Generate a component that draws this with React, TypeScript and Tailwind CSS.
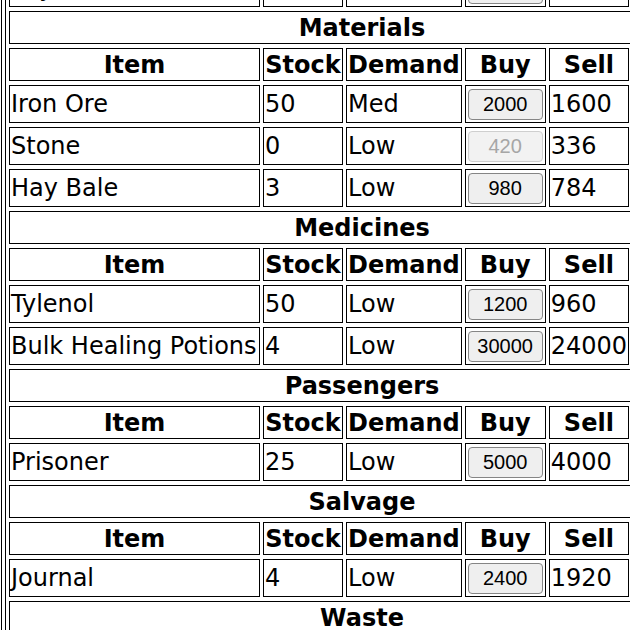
type Item = {
  name: string;
  stock: number;
  demand: string;
  buy: number;
  sell: number;
  disabled?: boolean;
};

type Section = { title: string; items: Item[] };

const sections: Section[] = [
  {
    title: "Materials",
    items: [
      { name: "Iron Ore", stock: 50, demand: "Med", buy: 2000, sell: 1600 },
      { name: "Stone", stock: 0, demand: "Low", buy: 420, sell: 336, disabled: true },
      { name: "Hay Bale", stock: 3, demand: "Low", buy: 980, sell: 784 },
    ],
  },
  {
    title: "Medicines",
    items: [
      { name: "Tylenol", stock: 50, demand: "Low", buy: 1200, sell: 960 },
      { name: "Bulk Healing Potions", stock: 4, demand: "Low", buy: 30000, sell: 24000 },
    ],
  },
  {
    title: "Passengers",
    items: [{ name: "Prisoner", stock: 25, demand: "Low", buy: 5000, sell: 4000 }],
  },
  {
    title: "Salvage",
    items: [{ name: "Journal", stock: 4, demand: "Low", buy: 2400, sell: 1920 }],
  },
];

const cell = "border border-black p-[1px]";
// headings sit a pixel lower in their boxes
const head = "border border-black px-[1px] pt-[2px] pb-0";

function BuyButton({ price, disabled }: { price: number; disabled?: boolean }) {
  return (
    <button
      disabled={disabled}
      className={
        "mx-auto block h-[31px] w-[75px] rounded-[4px] border font-['Liberation_Sans',Arial,sans-serif] text-[20px] leading-none " +
        (disabled
          ? "border-[#cfcfcf] bg-[#f2f2f2] text-[#a6a6a6]"
          : "border-[#858585] bg-[#efefef] text-black")
      }
    >
      {price}
    </button>
  );
}

function ItemRow({ item }: { item: Item }) {
  return (
    <tr>
      <td className={cell + " h-[38px]"}>{item.name}</td>
      <td className={cell}>{item.stock}</td>
      <td className={cell}>{item.demand}</td>
      <td className={cell}>
        <BuyButton price={item.buy} disabled={item.disabled} />
      </td>
      <td className={cell}>{item.sell}</td>
      <td className={cell}></td>
    </tr>
  );
}

function HeaderRow() {
  return (
    <tr>
      <th className={head}>Item</th>
      <th className={head}>Stock</th>
      <th className={head}>Demand</th>
      <th className={head}>Buy</th>
      <th className={head}>Sell</th>
      <th className={head}>Qty</th>
    </tr>
  );
}

export default function App() {
  return (
    <div className="h-[630px] w-[630px] overflow-hidden bg-white font-['DejaVu_Sans',Verdana,sans-serif] text-[24px] leading-[29px] text-black">
      <div className="-mt-[40px] ml-[1px] w-[900px] border border-black p-[3px]">
        <table className="table-fixed border-separate border-spacing-x-[3px] border-spacing-y-[4px] border border-black">
          <tbody>
            <tr>
              <td className={cell + " h-[38px] w-[251px]"}>Dry Rations</td>
              <td className={cell + " w-[80px]"}>12</td>
              <td className={cell + " w-[115px]"}>Low</td>
              <td className={cell + " w-[81px]"}>
                <BuyButton price={150} />
              </td>
              <td className={cell + " w-[80px]"}>120</td>
              <td className={cell + " w-[83px]"}></td>
            </tr>
            {sections.map((s) => (
              <>
                <tr key={s.title}>
                  <th colSpan={6} className={head}>
                    {s.title}
                  </th>
                </tr>
                <HeaderRow />
                {s.items.map((it) => (
                  <ItemRow key={it.name} item={it} />
                ))}
              </>
            ))}
            <tr>
              <th colSpan={6} className={head}>
                Waste
              </th>
            </tr>
            <HeaderRow />
          </tbody>
        </table>
      </div>
    </div>
  );
}
